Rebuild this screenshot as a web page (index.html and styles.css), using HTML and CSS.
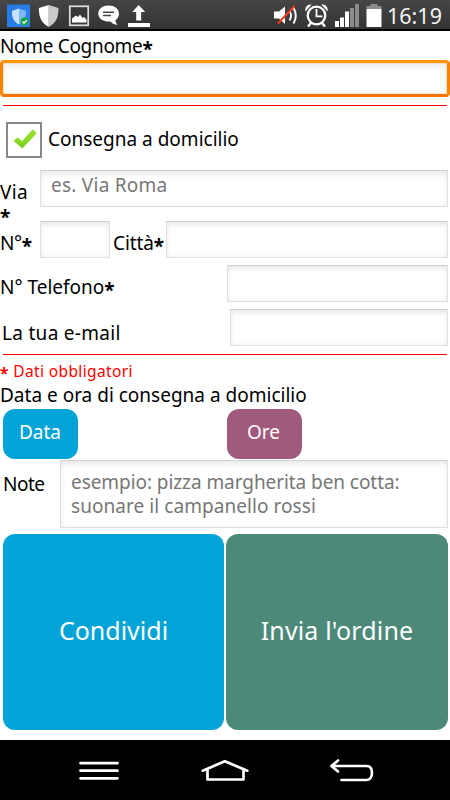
FILE: index.html
```
<!DOCTYPE html>
<html lang="it">
<head>
<meta charset="utf-8">
<title>Ordine</title>
<link rel="stylesheet" href="styles.css">
</head>
<body>
<header class="status">
  <svg class="status-icons" width="160" height="31" viewBox="0 0 160 31">
    <defs>
      <linearGradient id="blue" x2="1" y2="1"><stop offset="0" stop-color="#2379df"/><stop offset="1" stop-color="#2e83ef"/></linearGradient>
    </defs>
    <rect x="7" y="4.500" width="23" height="22.500" fill="url(#blue)"/>
    <path d="M19 8.500l7 2.500c0 6-1 10-7 13.500c-6-3.500-7-7.500-7-13.500z" fill="#7db8f8"/>
    <path d="M19 8.500v16c-6-3.500-7-7.500-7-13.500z" fill="#c6e2ff"/>
    <circle cx="24.500" cy="21.500" r="4" fill="#12a344"/>
    <path d="M22.500 21.500l1.500 1.700 2.800-3" fill="none" stroke="#fff" stroke-width="1.300"/>
    <path d="M48.700 5l9.800 3c0 9-2 14.500-9.800 19z" fill="#c9c9c9"/>
    <path d="M48.700 5l-9.800 3c0 9 2 14.500 9.800 19z" fill="#fff"/>
    <rect x="69.800" y="6.300" width="18.400" height="19" fill="#393939" stroke="#e0e0e0" stroke-width="1.700"/>
    <path d="M72 22.500v-4l4-3 2 1.500 2-2.500 2.500 3.500 1.500-1 2.500 2.500v3z" fill="#fff"/>
    <path d="M108.500 5.500c6 0 10.500 3.500 10.500 8.200 0 3-1.500 5-3.500 6.300 0 2 .8 3.500 2 4.800-3 0-5.500-1.300-7-3.300-7 .5-12.200-2.800-12.200-7.800 0-4.700 4.200-8.200 10.200-8.200z" fill="#fff"/>
    <path d="M103 12.200h11M103 15.500h8" stroke="#444" stroke-width="1.400"/>
    <path d="M138.700 5l6.500 7h-4v8.500h-5V12h-4z" fill="#fff"/><path d="M128 23h22v4h-22z" fill="#fff"/>
  </svg>
  <svg class="status-icons" width="116" height="31" viewBox="270 0 116 31">
    <path d="M274 11.500h5l6-5v17.500l-6-5.500h-5z" fill="#fff"/>
    <path d="M289.500 11q3 4.500 0 9.500M293.500 8q4.500 7.500 0 15.500" fill="none" stroke="#fff" stroke-width="1.900"/>
    <path d="M278 23.500l16.500-17.500" stroke="#f33a20" stroke-width="2"/>
    <circle cx="316.500" cy="15.500" r="8.800" fill="none" stroke="#fff" stroke-width="2.200"/>
    <path d="M316.500 9v7.300h6" fill="none" stroke="#fff" stroke-width="1.800"/>
    <path d="M305.500 11.500c-1-4 2-7.500 6-6.800zM327.500 11.500c1-4-2-7.500-6-6.800z" fill="#fff"/>
    <path d="M311 23l-3 3.500M322 23l3 3.500" stroke="#fff" stroke-width="2.600"/>
    <path d="M335 21h4v6h-4zM340 17.500h4V27h-4zM345 11.500h4V27h-4z" fill="#fff"/>
    <path d="M350 8h4v19h-4zM355 4h4v23h-4z" fill="#8b8b8b"/>
    <path d="M370.500 4h7v2.500h-7zM366.500 6h15v3h-15z" fill="#8b8b8b"/><path d="M366.500 9h15v18h-15z" fill="#fff"/>
  </svg>
  <span class="clock">16:19</span>
</header>

<main class="form">
  <div class="row name-label"><label class="t name">Nome Cognome<b>*</b></label></div>
  <div class="field focused"></div>
  <hr class="rule first">
  <div class="row check-row">
    <span class="checkbox"><svg width="35" height="35" viewBox="0 0 35 35"><defs><linearGradient id="green" x2="0" y2="1"><stop offset="0" stop-color="#a1e531"/><stop offset="1" stop-color="#72ce17"/></linearGradient></defs><path d="M7 17.800l3.800-2.800 4.200 3.800 10.800-12 3.300 3.500L15.300 25z" fill="url(#green)" stroke="#8ada2b" stroke-width="1" stroke-linejoin="round"/></svg></span>
    <span class="t consegna">Consegna a domicilio</span>
  </div>
  <div class="row via-row">
    <label class="via-label"><span class="t via">Via</span><span class="t star"><b>*</b></span></label>
    <div class="field"><span class="hint street">es. Via Roma</span></div>
  </div>
  <div class="row city-row">
    <label class="t number">N°<b>*</b></label><div class="field short"></div>
    <label class="t city">Città<b>*</b></label><div class="field"></div>
  </div>
  <div class="row phone-row"><label class="t phone">N° Telefono<b>*</b></label><div class="field"></div></div>
  <div class="row mail-row"><label class="t mail">La tua e-mail</label><div class="field"></div></div>
  <hr class="rule">
  <p class="required"><b>*</b> Dati obbligatori</p>
  <p class="t when">Data e ora di consegna a domicilio</p>
  <div class="pickers">
    <div class="button blue"><span class="data">Data</span></div>
    <div class="button plum"><span class="ore">Ore</span></div>
  </div>
  <div class="row notes-row"><label class="t note">Note</label>
    <div class="field"><p class="hint"><span class="hint-one">esempio: pizza margherita ben cotta:</span><br><span class="hint-two">suonare il campanello rossi</span></p></div>
  </div>
  <div class="actions">
    <div class="button blue"><span class="share">Condividi</span></div>
    <div class="button green"><span class="send">Invia l'ordine</span></div>
  </div>
</main>

<nav class="navbar">
  <svg width="450" height="60" viewBox="0 740 450 60" fill="none" stroke="#fff" stroke-width="2.700" stroke-linecap="round" stroke-linejoin="round">
    <path d="M80.500 763.200h37M80.500 770.700h37M80.500 778.300h37"/>
    <path d="M202.800 770.700L224.800 761.200L247.300 770.700M207.500 770v9.500h36V770"/>
    <path d="M338 760.500l-6.500 5.500 6.500 5.500M332 766h34.500c3 0 5.500 2 5.500 6.800s-2.500 7.200-5.500 7.200H341.500"/>
  </svg>
</nav>
</body>
</html>
```

FILE: styles.css
```
* { box-sizing: border-box; }
body {
  margin: 0;
  width: 450px;
  height: 800px;
  overflow: hidden;
  display: flex;
  flex-direction: column;
  background: #fff;
  color: #000;
  font-family: "Noto Sans", sans-serif;
  font-size: 19px;
  line-height: 24px;
}
p { margin: 0; }
.status {
  height: 31px;
  display: flex;
  align-items: flex-start;
  background: linear-gradient(#464646, #333 94%, #000 94%);
  color: #f4f4f4;
}
.status-icons + .status-icons { margin-left: 110px; }
.clock { margin-left: 1px; font-size: 21.5px; line-height: 32px; white-space: nowrap; }
.form { height: 709px; display: flex; flex-direction: column; }
.row { display: flex; }
.t { white-space: nowrap; }
.t b, .required b {
  display: inline-block;
  transform: translateY(3px);
  line-height: 1;
}
.name-label { height: 29px; padding-top: 3px; }
.name { letter-spacing: -0.32px; }
.field {
  flex: 1;
  height: 37px;
  border: 1px solid #e0e0e0;
  border-top: 1px solid #d0d0d0;
  box-shadow: inset 0 5px 7px -3px #e5e5e5, inset 0 0 5px #f0f0f0;
}
.field.focused {
  flex: none;
  border: 3px solid #fa8207;
  border-top-color: #ff950d;
  border-bottom-color: #f57403;
  border-radius: 4px;
  box-shadow: inset 0 0 2px #ffb25c, inset 0 4px 7px #eee;
}
.rule { flex: none; width: 444px; height: 1px; margin: 0 3px; border: 0; background: #f00; }
.rule.first { margin-top: 8px; }
.check-row { height: 64px; padding: 16px 0 0 6px; }
.checkbox { width: 36px; height: 36px; border: 2px solid #888; margin-right: 6px; }
.checkbox svg { display: block; margin: -1px; }
.consegna { padding-top: 5px; }
.via-row { height: 51px; padding-right: 2px; }
.via-label { width: 40px; padding-top: 10px; display: flex; flex-direction: column; }
.via { letter-spacing: 0.3px; }
.star { line-height: 20px; }
.hint { display: block; padding: 2px 0 0 10px; color: #777; white-space: nowrap; }
.street { letter-spacing: 0.25px; }
.city-row { height: 44px; padding-right: 2px; }
.number { width: 40px; padding-top: 10px; letter-spacing: -0.4px; }
.city-row .short { flex: none; width: 70px; }
.city { width: 56px; padding: 10px 0 0 3px; letter-spacing: -0.1px; }
.phone-row { height: 44px; padding-right: 2px; }
.phone { width: 227px; padding-top: 10px; }
.mail-row { height: 45px; padding-right: 2px; }
.mail { width: 230px; padding: 12px 0 0 2px; letter-spacing: 0.3px; }
.required { height: 27px; padding-top: 4px; color: #f00; font-size: 15.5px; letter-spacing: 0.38px; white-space: nowrap; }
.required b { transform: translateY(2px); }
.when { height: 27px; padding-top: 1px; }
.pickers { height: 51px; display: flex; gap: 149px; padding-left: 2.500px; }
.button { display: flex; justify-content: center; border-radius: 12px; color: #fff; white-space: nowrap; }
.pickers .button { width: 75px; height: 50px; padding-top: 11px; }
.ore { margin-right: 1px; }
.blue { background: #02a3d7; }
.plum { background: #a05a7c; }
.green { background: #4c8979; }
.notes-row { height: 74px; padding-right: 2px; }
.note { width: 60px; padding: 12px 0 0 3px; letter-spacing: -0.5px; }
.notes-row .field { height: 68px; }
.notes-row .hint { padding-top: 9px; }
.hint-one { letter-spacing: -0.07px; }
.hint-two { letter-spacing: 0.06px; }
.actions { display: grid; grid-template-columns: 221px 222px; gap: 2px; padding-left: 3px; }
.actions .button { height: 196px; align-items: center; padding-bottom: 5px; font-size: 25px; }
.send { letter-spacing: 0.15px; }
.navbar { height: 60px; background: #000; }
.navbar svg { display: block; }
```
